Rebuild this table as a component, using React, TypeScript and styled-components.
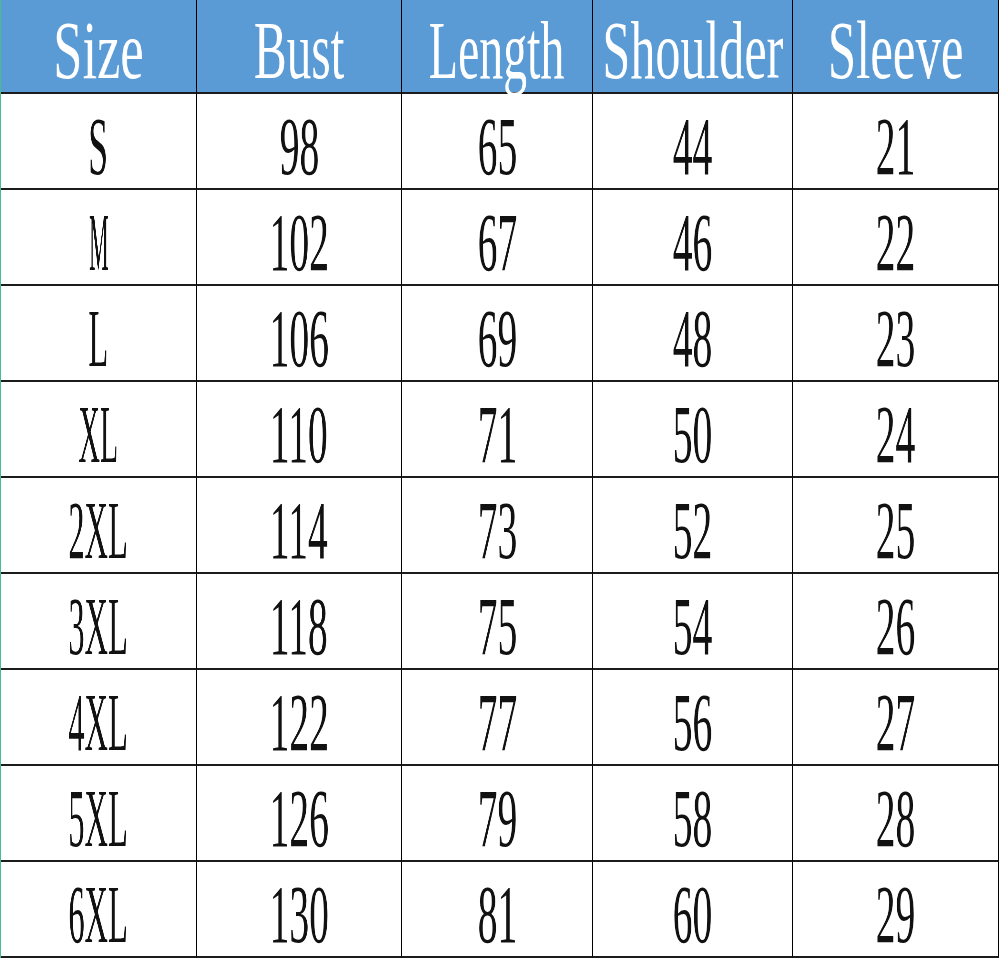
import React from "react";
import styled, { createGlobalStyle } from "styled-components";

const Global = createGlobalStyle`
  html, body { margin: 0; padding: 0; background: #ffffff; }
  #root { width: 1000px; height: 960px; }
`;

const Page = styled.div`
  width: 1000px;
  height: 960px;
  background: #ffffff;
  overflow: hidden;
`;

const Table = styled.div`
  display: grid;
  grid-template-columns: 196px 205px 191px 200px 206px;
  grid-template-rows: 94px repeat(9, 96px);
  width: 998px;
  border-left: 1px solid #47bd8e;
  box-sizing: border-box;
`;

const Cell = styled.div<{ $head?: boolean }>`
  box-sizing: border-box;
  min-width: 0;
  display: flex;
  align-items: center;
  justify-content: center;
  border-right: 1px solid #000;
  border-bottom: 2px solid #1c1c1c;
  background: ${(p) => (p.$head ? "#5b9bd5" : "#ffffff")};
  color: ${(p) => (p.$head ? "#ffffff" : "#111111")};
  padding-top: ${(p) => (p.$head ? "9px" : "10px")};
`;

const Label = styled.span`
  display: inline-block;
  flex: none;
  font-family: "Liberation Serif", "Times New Roman", serif;
  font-size: 83px;
  line-height: 1;
  white-space: nowrap;
  transform-origin: center;
  will-change: transform;
`;

const ADV: Record<string, number> = {
  S: 0.556, M: 0.889, L: 0.611, X: 0.722, B: 0.667,
  i: 0.278, z: 0.444, e: 0.444, u: 0.5, s: 0.389, t: 0.278,
  n: 0.5, g: 0.5, h: 0.5, o: 0.5, l: 0.278, d: 0.5, r: 0.333, v: 0.5,
};

function Text({ value, head }: { value: string; head?: boolean }) {
  const per = head ? 22.6 : 19.8;
  const natural = value.split("").reduce((a, c) => a + (ADV[c] ?? 0.5), 0) * 83;
  const scale = Math.min(head ? 0.65 : 0.5, (per * value.length) / natural);
  return <Label style={{ transform: `scaleX(${scale.toFixed(3)})` }}>{value}</Label>;
}

const headers = ["Size", "Bust", "Length", "Shoulder", "Sleeve"];
const rows = [
  ["S", "98", "65", "44", "21"],
  ["M", "102", "67", "46", "22"],
  ["L", "106", "69", "48", "23"],
  ["XL", "110", "71", "50", "24"],
  ["2XL", "114", "73", "52", "25"],
  ["3XL", "118", "75", "54", "26"],
  ["4XL", "122", "77", "56", "27"],
  ["5XL", "126", "79", "58", "28"],
  ["6XL", "130", "81", "60", "29"],
];

export default function App() {
  return (
    <Page>
      <Global />
      <Table>
        {headers.map((h) => (
          <Cell $head key={h}>
            <Text value={h} head />
          </Cell>
        ))}
        {rows.map((r, i) =>
          r.map((v, j) => (
            <Cell key={`${i}-${j}`}>
              <Text value={v} />
            </Cell>
          ))
        )}
      </Table>
    </Page>
  );
}
